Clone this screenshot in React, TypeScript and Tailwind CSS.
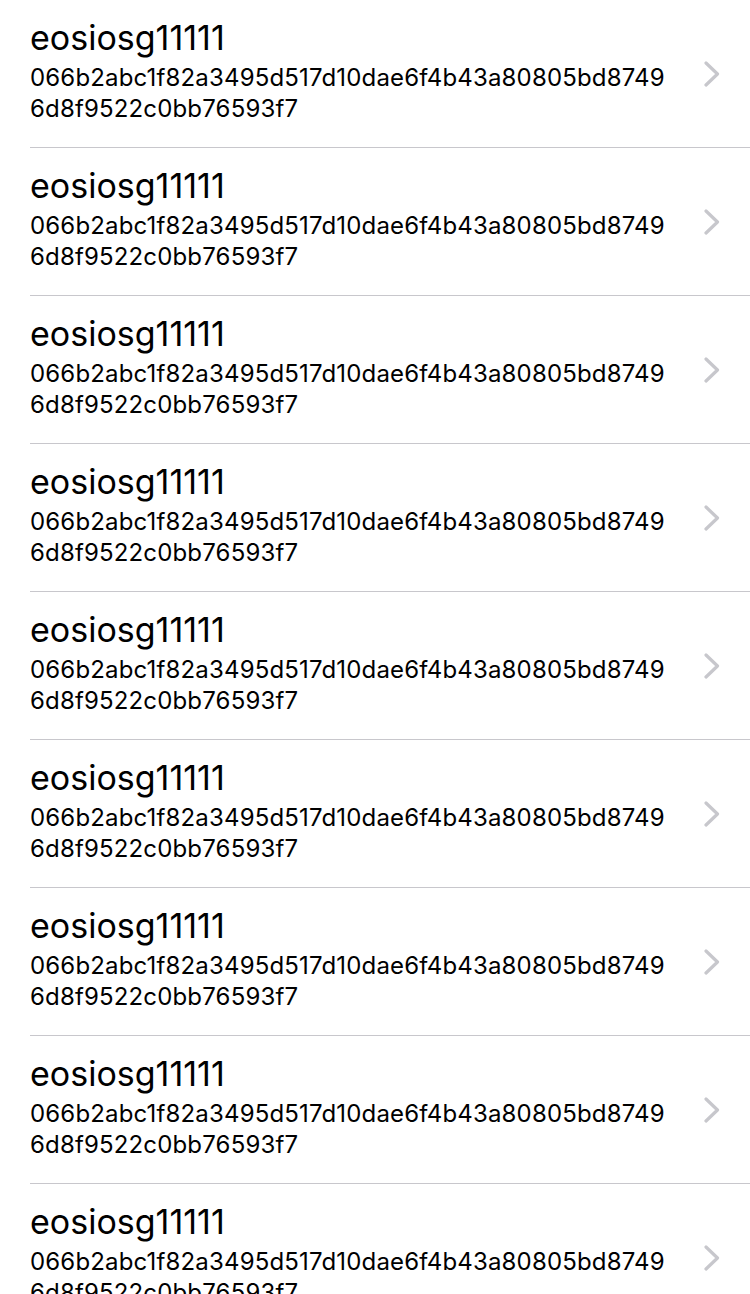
const accounts = Array.from({ length: 9 }, () => ({
  name: 'eosiosg11111',
  key: '066b2abc1f82a3495d517d10dae6f4b43a80805bd87496d8f9522c0bb76593f7',
}));

function Chevron() {
  return (
    <svg width="16" height="26" viewBox="0 0 16 26" fill="none">
      <polyline
        points="2,2 13.5,13 2,24"
        stroke="#c7c7cc"
        strokeWidth="3.2"
        strokeLinecap="round"
        strokeLinejoin="round"
      />
    </svg>
  );
}

function AccountRow({ name, hash }: { name: string; hash: string }) {
  // the key wraps after 45 chars on the device
  const lines = [hash.slice(0, 45), hash.slice(45)];
  return (
    <div className="ml-[30px] h-[148px] border-b border-[#c8c7cc] flex items-start">
      <div className="flex-1 pt-[18px] text-black">
        <div className="text-[34px] leading-[40px]">{name}</div>
        <div className="mt-[4px] text-[24px] leading-[31px] tracking-[0.16px] whitespace-nowrap">
          {lines.map((l, i) => (
            <div key={i}>{l}</div>
          ))}
        </div>
      </div>
      <div className="w-[62px] h-full flex items-center pl-[16px]">
        <Chevron />
      </div>
    </div>
  );
}

export default function App() {
  return (
    <div
      className="w-[750px] h-[1294px] overflow-hidden bg-white"
      style={{ fontFamily: 'Inter, "Noto Sans", sans-serif' }}
    >
      {accounts.map((a, i) => (
        <AccountRow key={i} name={a.name} hash={a.key} />
      ))}
    </div>
  );
}
